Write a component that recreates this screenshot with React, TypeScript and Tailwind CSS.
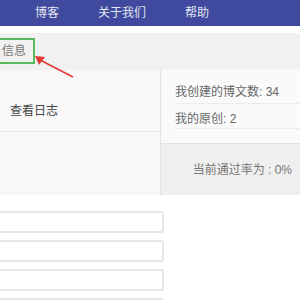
export default function App() {
  const font = { fontFamily: '"Liberation Sans", "Noto Sans CJK SC", sans-serif' };

  return (
    <div className="relative w-[300px] h-[300px] overflow-hidden bg-white" style={font}>
      {/* top nav */}
      <div className="h-[26px] bg-[#3f4a9e] flex items-center pl-[35px] gap-[39px] text-[12px] text-[#e4e6f3]">
        <span>博客</span>
        <span>关于我们</span>
        <span>帮助</span>
      </div>

      <div className="h-[7px] bg-white" />

      {/* tab strip */}
      <div className="h-[37px] bg-[#f1f1f1] pt-[5px]">
        <div className="w-[35px] h-[26px] border-y-2 border-r-2 border-[#5cb85c] flex items-center pl-[2px] text-[12px] text-[#777]">
          信息
        </div>
      </div>

      {/* panels */}
      <div className="flex h-[125px]">
        <div className="w-[160px] bg-[#f8f8f8] flex flex-col">
          <div className="h-[62px] border-b border-[#e6e6e6] pl-[10px] pt-[33px] leading-[16px] text-[12px] text-[#444]">
            查看日志
          </div>
          <div className="flex-1" />
        </div>
        <div className="flex-1 border-l border-[#e2e2e2] flex flex-col">
          <div className="h-[73px] bg-[#fafafa] pl-[14px] pt-[14px] text-[12px] text-[#666]">
            <div className="h-[20px] border-b border-[#ececec] leading-[16px]">我创建的博文数: 34</div>
            <div className="h-[25px] border-b border-[#ececec] pt-[7px] leading-[16px]">我的原创: 2</div>
          </div>
          <div className="flex-1 bg-[#efefef] border-t border-[#e4e4e4] flex justify-end pr-[8px] pt-[17px] text-[12px] text-[#777]">
            当前通过率为 : 0%
          </div>
        </div>
      </div>

      {/* inputs */}
      <div className="pt-[16px] flex flex-col gap-[7px]">
        {[0, 1, 2, 3].map((i) => (
          <div
            key={i}
            className="w-[168px] -ml-[4px] h-[22px] rounded-[3px] border-2 border-[#e6e6e6] bg-white"
          />
        ))}
      </div>

      {/* annotation arrow */}
      <svg className="absolute left-0 top-0" width="300" height="300">
        <line x1="73" y1="77" x2="40" y2="60" stroke="#e53935" strokeWidth="1.6" />
        <polygon points="35,56 45,57 39,65" fill="#e53935" />
      </svg>
    </div>
  );
}
